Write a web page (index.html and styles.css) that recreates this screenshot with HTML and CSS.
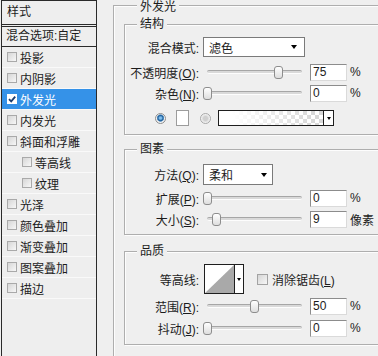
FILE: index.html
```html
<!DOCTYPE html>
<html lang="zh-CN">
<head>
<meta charset="utf-8">
<title>图层样式 - 外发光</title>
<link rel="stylesheet" href="styles.css">
</head>
<body>
<div class="app">
  <aside class="styles">
    <div class="hdr">样式</div>
    <div class="blend">混合选项:自定</div>
    <ul class="list">
      <li><span class="cb"></span>投影</li>
      <li><span class="cb"></span>内阴影</li>
      <li class="sel"><span class="cb on"><svg width="10" height="10" viewBox="0 0 10 10"><path d="M2 5.2 L4.2 7.4 L8.2 2.6" fill="none" stroke="#1b3d70" stroke-width="1.8"/></svg></span>外发光</li>
      <li><span class="cb"></span>内发光</li>
      <li><span class="cb"></span>斜面和浮雕</li>
      <li class="sub"><span class="cb"></span>等高线</li>
      <li class="sub"><span class="cb"></span>纹理</li>
      <li><span class="cb"></span>光泽</li>
      <li><span class="cb"></span>颜色叠加</li>
      <li><span class="cb"></span>渐变叠加</li>
      <li><span class="cb"></span>图案叠加</li>
      <li><span class="cb"></span>描边</li>
    </ul>
  </aside>

  <main class="panel">
    <section class="group outer">
      <div class="legend">外发光</div>

      <section class="group inner g-struct">
        <div class="legend">结构</div>
        <div class="row r-mode">
          <span class="lbl">混合模式:</span>
          <div class="select w-mode"><span>滤色</span><i class="arr"></i></div>
        </div>
        <div class="row r22">
          <span class="lbl">不透明度(<u>O</u>):</span>
          <div class="slider"><div class="track"></div><div class="thumb" style="--v:75"></div></div>
          <div class="num">75</div><span class="unit">%</span>
        </div>
        <div class="row r20">
          <span class="lbl">杂色(<u>N</u>):</span>
          <div class="slider"><div class="track"></div><div class="thumb" style="--v:0"></div></div>
          <div class="num">0</div><span class="unit">%</span>
        </div>
        <div class="row colors">
          <span class="radio on"></span>
          <span class="swatch"></span>
          <span class="radio off"></span>
          <div class="gradient"><span class="gfill"></span><span class="gbtn"><i class="arr small"></i></span></div>
        </div>
      </section>

      <section class="group inner g-elem">
        <div class="legend">图素</div>
        <div class="row r-method">
          <span class="lbl">方法(<u>Q</u>):</span>
          <div class="select w-method"><span>柔和</span><i class="arr"></i></div>
        </div>
        <div class="row r22 r-spread">
          <span class="lbl">扩展(<u>P</u>):</span>
          <div class="slider"><div class="track"></div><div class="thumb" style="--v:0"></div></div>
          <div class="num">0</div><span class="unit">%</span>
        </div>
        <div class="row r20">
          <span class="lbl">大小(<u>S</u>):</span>
          <div class="slider"><div class="track"></div><div class="thumb" style="--v:9.5"></div></div>
          <div class="num">9</div><span class="unit">像素</span>
        </div>
      </section>

      <section class="group inner g-qual">
        <div class="legend">品质</div>
        <div class="row r-contour">
          <span class="lbl">等高线:</span>
          <div class="contour">
            <span class="cshape"><svg width="29" height="28" viewBox="0 0 29 28"><rect width="29" height="28" fill="#fff"/><polygon points="0,28 29,0 29,28" fill="#a9a9a9"/></svg></span>
            <span class="cbtn"><i class="arr small"></i></span>
          </div>
          <span class="chk"></span>
          <span class="chk-text">消除锯齿(<u>L</u>)</span>
        </div>
        <div class="row r22 r-range">
          <span class="lbl">范围(<u>R</u>):</span>
          <div class="slider"><div class="track"></div><div class="thumb" style="--v:50"></div></div>
          <div class="num">50</div><span class="unit">%</span>
        </div>
        <div class="row r22">
          <span class="lbl">抖动(<u>J</u>):</span>
          <div class="slider"><div class="track"></div><div class="thumb" style="--v:0"></div></div>
          <div class="num">0</div><span class="unit">%</span>
        </div>
      </section>
    </section>
  </main>
</div>
</body>
</html>
```

FILE: styles.css
```css
* { box-sizing: border-box; }

html, body { margin: 0; padding: 0; }

body {
  width: 378px;
  height: 356px;
  overflow: hidden;
  background: #efefef;
  font-family: "Liberation Sans", "Noto Sans CJK SC", sans-serif;
  font-size: 12px;
  color: #1c1c1c;
}

.app {
  display: flex;
  height: 356px;
}

/* ---------- left style list ---------- */
.styles {
  flex: none;
  width: 96px;
  margin-left: 1px;
  border-left: 1px solid #2a2a2a;
  border-right: 1px solid #2a2a2a;
  background: #eeeeee;
}

.hdr {
  height: 25px;
  border-top: 1px solid #2a2a2a;
  border-bottom: 1px solid #2a2a2a;
  padding-left: 5px;
  line-height: 23px;
}

.blend {
  margin-top: 1px;
  height: 21px;
  border-top: 1px solid #2a2a2a;
  border-bottom: 1px solid #2a2a2a;
  padding-left: 4px;
  line-height: 19px;
}

.list {
  list-style: none;
  margin: 0;
  padding: 0;
}

.list li {
  height: 21px;
  display: flex;
  align-items: center;
  gap: 3px;
  padding-left: 5px;
  border-bottom: 1px solid #f9f9f9;
}

.list li.sub { padding-left: 20px; }

.list li.sel {
  background: #3592e8;
  color: #fff;
}

.cb {
  flex: none;
  width: 10px;
  height: 10px;
  border: 1px solid #a9a9a9;
  background: linear-gradient(135deg, #d6d6d6, #f7f7f7);
}

.cb.on {
  border: none;
  background: #fff;
  display: flex;
}

/* ---------- right panel ---------- */
.panel {
  flex: 1;
  min-width: 0;
  padding-top: 5px;
}

.group {
  border: 1px solid #aeaeae;
  box-shadow: 1px 1px 0 #fdfdfd, inset 1px 1px 0 #fdfdfd;
}

.legend {
  width: fit-content;
  margin-top: -8px;
  padding: 0 3px;
  line-height: 14px;
  height: 14px;
  background: #efefef;
}

.outer {
  margin-left: 16px;
  width: 265px;
  height: 351px;
  padding-left: 10px;
  border-right: none;
  border-bottom: none;
}

.outer > .legend { margin-left: 13px; margin-top: -6px; }

.inner > .legend { margin-left: 12px; }

.inner { border-right: none; }

.g-struct { margin-top: 10px; padding-bottom: 7px; }
.g-elem { margin-top: 14px; padding-bottom: 5px; }
.g-qual { margin-top: 16px; padding-bottom: 5px; }

.row {
  display: flex;
  align-items: center;
}

.r22 { height: 22px; }
.r20 { height: 20px; }

.r-mode { margin-top: 6px; height: 20px; }
.r-mode + .r22 { margin-top: 4px; }
.r-method { margin-top: 8px; height: 21px; }
.r-spread { margin-top: 2px; }
.r-contour { margin-top: 6px; height: 30px; }
.r-range { margin-top: 1px; }

.lbl {
  flex: none;
  width: 74px;
  margin-right: 4px;
  text-align: right;
  white-space: nowrap;
}

u { text-decoration: underline; text-underline-offset: 1px; }

/* dropdown */
.select {
  height: 100%;
  display: flex;
  align-items: center;
  padding-left: 5px;
  border: 1px solid #7a7a7a;
  background: #fff;
}

.w-mode { width: 102px; }
.w-method { width: 70px; }

.arr {
  width: 0;
  height: 0;
  margin-left: auto;
  border-left: 3.5px solid transparent;
  border-right: 3.5px solid transparent;
  border-top: 4px solid #000;
}

.w-mode .arr { margin-right: 7px; }
.w-method .arr { margin-right: 5px; }

.arr.small {
  margin: 0;
  border-left-width: 2.5px;
  border-right-width: 2.5px;
  border-top-width: 3px;
}

/* slider */
.slider {
  flex: none;
  position: relative;
  width: 103px;
  height: 13px;
  padding: 0 4px;
  display: flex;
  align-items: center;
}

.track {
  flex: 1;
  height: 4px;
  border-top: 1px solid #a6a6a6;
  border-bottom: 1px solid #fdfdfd;
  background: #d9d9d9;
  border-radius: 2px;
}

.thumb {
  position: absolute;
  top: 0;
  left: calc(var(--v) * 0.95px - 0.5px);
  width: 9px;
  height: 13px;
  border: 1px solid #8d8d8d;
  border-radius: 3px;
  background: linear-gradient(#ffffff, #dedede);
}

/* number box */
.num {
  flex: none;
  width: 37px;
  height: 17px;
  margin-left: 4px;
  padding-left: 2px;
  line-height: 15px;
  border: 1px solid;
  border-color: #8c8c8c #dadada #dadada #8c8c8c;
  background: #fff;
}

.unit { margin-left: 3px; }

/* color row */
.colors {
  margin-top: 6px;
  height: 18px;
  padding-left: 30px;
}

.radio {
  flex: none;
  width: 11px;
  height: 11px;
  border-radius: 50%;
  border: 1px solid #8e8e8e;
}

.radio.on {
  background: radial-gradient(circle at 50% 45%, #7fc0f0 0 1px, #1f5f9a 2.6px, #6b9cc8 3.4px, #f2f2f2 4px);
}

.radio.off {
  margin-left: 11px;
  border-color: #a8a8a8;
  background: radial-gradient(circle, #cfcfcf 0 2px, #f6f6f6 4.5px);
}

.swatch {
  flex: none;
  width: 13px;
  height: 16px;
  margin-left: 10px;
  border: 1px solid #9c9c9c;
  background: #fff;
}

.gradient {
  flex: none;
  display: flex;
  width: 116px;
  height: 16px;
  margin-left: 7px;
  border: 1px solid #1e1e1e;
}

.gfill {
  flex: 1;
  background:
    linear-gradient(to right, #ffffff 12%, rgba(255, 255, 255, 0) 92%),
    repeating-conic-gradient(#d8d8d8 0 25%, #ffffff 0 50%) 0 0 / 8px 8px;
}

.gbtn {
  width: 10px;
  border-left: 1px solid #1e1e1e;
  background: #fff;
  display: flex;
  align-items: center;
  justify-content: center;
}

/* contour */
.contour {
  flex: none;
  display: flex;
  width: 40px;
  height: 30px;
  margin-left: 1px;
  border: 1px solid #1e1e1e;
  background: #fff;
}

.cshape { display: flex; width: 29px; }

.cbtn {
  flex: 1;
  border-left: 1px solid #1e1e1e;
  display: flex;
  align-items: center;
  justify-content: center;
}

.chk {
  flex: none;
  width: 11px;
  height: 11px;
  margin-left: 13px;
  border: 1px solid #a3a3a3;
  background: linear-gradient(135deg, #d6d6d6, #f7f7f7);
}

.chk-text { margin-left: 4px; }
```
